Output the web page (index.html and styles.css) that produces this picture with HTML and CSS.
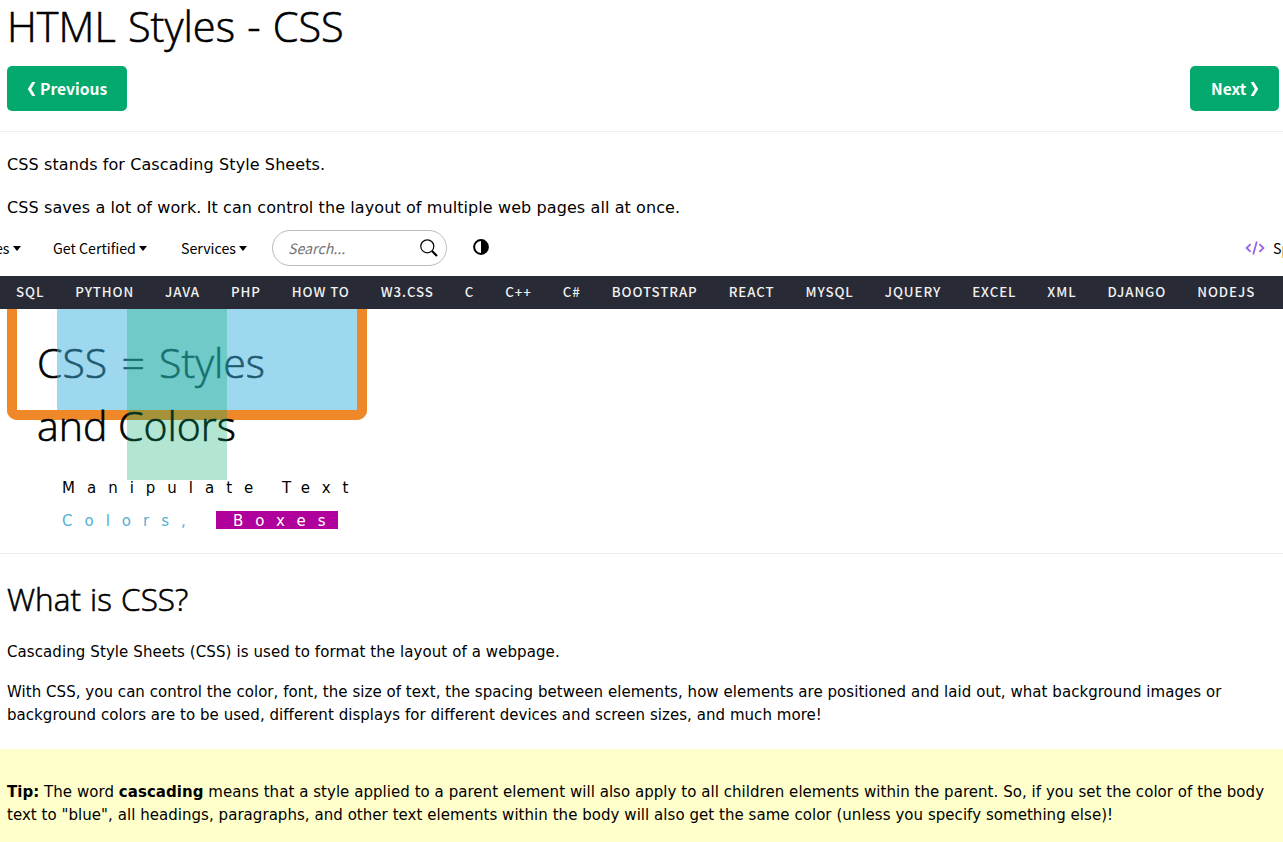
FILE: index.html
```html
<!DOCTYPE html>
<html lang="en">
<head>
<meta charset="utf-8">
<title>HTML Styles - CSS</title>
<link rel="stylesheet" href="styles.css">
</head>
<body>
<header class="intro">
  <h1><span>HTML Styles - CSS</span></h1>
  <div class="pager">
    <a class="btn prev"><svg width="9" height="14" viewBox="0 0 9 14"><path d="M5.2 0H8.4L4.2 7l4.2 7H5.2L.8 7z" fill="#fff"/></svg><span>Previous</span></a>
    <a class="btn next"><span>Next</span><svg width="9" height="14" viewBox="0 0 9 14"><path d="M3.8 0H.6L4.8 7 .6 14h3.2L8.2 7z" fill="#fff"/></svg></a>
  </div>
</header>
<section class="lead">
  <p class="lead1"><span>CSS stands for Cascading Style Sheets.</span></p>
  <p class="lead2"><span>CSS saves a lot of work. It can control the layout of multiple web pages all at once.</span></p>
</section>
<nav class="top">
  <a class="item cut"><span>es</span><i class="caret"></i></a>
  <a class="item cert"><span>Get Certified</span><i class="caret"></i></a>
  <a class="item serv"><span>Services</span><i class="caret"></i></a>
  <div class="search"><em>Search...</em><svg width="18" height="18" viewBox="0 0 18 18" fill="none" stroke="#000"><circle cx="7.3" cy="7.3" r="6.5" stroke-width="1.2"/><path d="M12 12l5 5" stroke-width="2.2"/></svg></div>
  <svg class="contrast" width="16" height="16" viewBox="0 0 16 16"><circle cx="8" cy="8" r="6.9" fill="#fff" stroke="#000" stroke-width="2"/><path d="M8 1a7 7 0 0 1 0 14z"/></svg>
  <a class="spaces"><svg width="20" height="14" viewBox="0 0 20 14" fill="none" stroke="#9763e5" stroke-width="1.8"><path d="M5.6 3.2L1.6 7l4 3.8M14.4 3.2l4 3.8-4 3.8M11.8.6L8.2 13.4"/></svg><span>Sp</span></a>
</nav>
<nav class="bar">
  <a>SQL</a><a>PYTHON</a><a>JAVA</a><a>PHP</a><a>HOW TO</a><a>W3.CSS</a><a>C</a><a>C++</a><a>C#</a><a>BOOTSTRAP</a><a>REACT</a><a>MYSQL</a><a>JQUERY</a><a>EXCEL</a><a>XML</a><a>DJANGO</a><a>NODEJS</a>
</nav>
<section class="demo">
  <div class="frame"></div>
  <p class="big big1"><span>CSS = Styles</span></p>
  <p class="big big2"><span>and Colors</span></p>
  <p class="wide"><span>Manipulate Text</span></p>
  <p class="wide second"><span class="sky">Colors,</span><span class="boxes">Boxes</span></p>
  <div class="blue"></div>
  <div class="green"></div>
</section>
<main class="what">
  <h2><span>What is CSS?</span></h2>
  <p class="w1"><span>Cascading Style Sheets (CSS) is used to format the layout of a webpage.</span></p>
  <p class="w2"><span>With CSS, you can control the color, font, the size of text, the spacing between elements, how elements are positioned and laid out, what background images or</span><br><span>background colors are to be used, different displays for different devices and screen sizes, and much more!</span></p>
</main>
<aside class="tip">
  <p><span><b>Tip:</b> The word <b>cascading</b> means that a style applied to a parent element will also apply to all children elements within the parent. So, if you set the color of the body</span><br><span>text to "blue", all headings, paragraphs, and other text elements within the body will also get the same color (unless you specify something else)!</span></p>
</aside>
</body>
</html>
```
FILE: styles.css
```css
* { box-sizing: border-box; }
body {
  margin: 0;
  width: 1283px;
  height: 842px;
  overflow: hidden;
  background: #fff;
  color: #000;
  font: 15px/23px "DejaVu Sans", Verdana, sans-serif;
  letter-spacing: .045px;
  white-space: nowrap;
}
h1, h2, p { margin: 0; font-weight: 400; }
h1, h2, .big {
  font-family: "Open Sans", "Noto Sans", sans-serif;
  font-weight: 300;
  letter-spacing: 0;
  -webkit-text-stroke: .6px #000;
}
.intro { height: 132px; border-bottom: 1px solid #eee; }
h1 { height: 66px; padding-left: 7px; font-size: 41.5px; line-height: 52px; word-spacing: 1.4px; }
.pager { display: flex; justify-content: space-between; padding: 0 4px 0 7px; }
.btn {
  display: flex; align-items: center; gap: 4px;
  height: 45px; border-radius: 5px; background: #04aa6d; color: #fff;
  font: 700 15.6px/45px "Noto Sans CJK SC", sans-serif;
  letter-spacing: 0;
}
.prev { width: 120px; padding-left: 20px; }
.next { width: 89px; padding-left: 21px; }
.lead { height: 97px; padding: 21px 0 0 7px; font-size: 16px; line-height: 24px; letter-spacing: .094px; }
.lead2 { margin-top: 19px; }
.top { display: flex; align-items: center; height: 47px; padding-bottom: 9px; font: 14.2px/24px "Noto Sans CJK SC", sans-serif; letter-spacing: 0; }
.top > * { flex: none; }
.item { display: flex; align-items: center; gap: 3px; }
.caret { border: 4.8px solid transparent; border-top: 5px solid #000; border-bottom: 0; }
.cut { width: 58px; margin-left: -5px; }
.cert { width: 128px; }
.serv { width: 91px; }
.search { display: flex; align-items: center; justify-content: space-between; width: 175px; height: 36px; padding: 0 8px 0 15px; border: 1px solid #bbb; border-radius: 18px; color: #757575; }
.contrast { margin: 0 0 3px 26px; }
.spaces { display: flex; align-items: center; gap: 8px; margin-left: 756px; }
.bar { display: flex; height: 33px; background: #282a35; color: #f1f1f1; font: 500 13.3px/32px "Noto Sans CJK SC", sans-serif; letter-spacing: .91px; }
.bar a { flex: none; padding: 0 15px 0 16px; }
.demo { position: relative; height: 245px; padding-top: 22px; border-bottom: 1px solid #eee; }
.frame { position: absolute; left: 7px; top: 0; width: 360px; height: 111px; border: 10px solid #ee8828; border-top: 0; border-radius: 0 0 10px 10px; }
.blue { position: absolute; left: 57px; top: 0; width: 300px; height: 101px; background: rgba(62, 178, 223, .5); }
.green { position: absolute; left: 127px; top: 0; width: 100px; height: 171px; background: rgba(4, 170, 109, .3); }
.big { position: relative; padding-left: 37px; font-size: 41px; line-height: 63px; }
.big1 { word-spacing: 3.6px; }
.wide { display: flex; padding-left: 62px; margin-top: 20px; line-height: 22px; letter-spacing: 12px; }
.second { align-items: center; margin-top: 11px; }
.sky { width: 154px; color: #53b0d4; }
.boxes { width: 122px; height: 18px; margin-bottom: 2px; padding-left: 17px; background: #b0009b; color: #fff; line-height: 20px; }
.what { height: 195px; padding: 22px 0 0 7px; }
h2 { font-size: 31.5px; line-height: 46px; word-spacing: 1px; }
.w1 { margin-top: 19px; letter-spacing: .09px; }
.w2 { margin-top: 17px; }
.tip { height: 93px; padding: 32px 0 0 7px; background: #ffffcc; }
```
